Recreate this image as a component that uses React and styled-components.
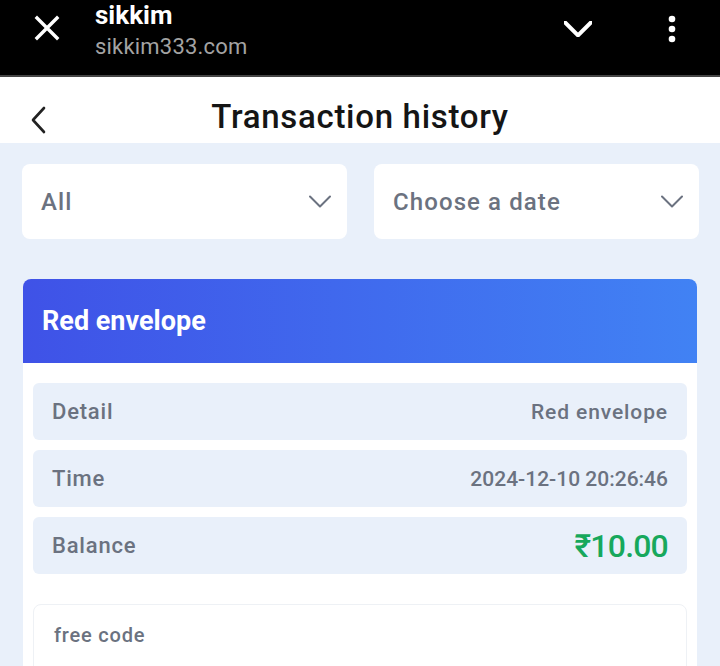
import React from "react";
import styled, { createGlobalStyle } from "styled-components";

const GlobalStyle = createGlobalStyle`
  body {
    margin: 0;
    background: #e9f0fa;
    font-family: Roboto, "Liberation Sans", sans-serif;
  }
`;

const BrowserBar = styled.div`
  height: 77px;
  background: #000;
  border-bottom: 2px solid #444;
  display: flex;
  align-items: flex-start;
  box-sizing: border-box;
`;

const CloseBtn = styled.div`
  width: 95px;
  height: 56px;
  display: flex;
  align-items: center;
  padding-left: 34px;
  box-sizing: border-box;
`;

const SiteInfo = styled.div`
  flex: 1;
  display: flex;
  flex-direction: column;
  padding-top: 1px;
`;

const SiteName = styled.div`
  color: #fff;
  font-size: 26px;
  font-weight: 700;
  line-height: 28px;
`;

const SiteUrl = styled.div`
  color: #a3a3a3;
  font-size: 22px;
  line-height: 36px;
  letter-spacing: 0.2px;
`;

const BarIcon = styled.div`
  width: ${(p) => p.w}px;
  height: 58px;
  display: flex;
  align-items: center;
  justify-content: center;
`;

const Header = styled.div`
  height: 66px;
  background: #fff;
  position: relative;
  display: flex;
  align-items: flex-end;
  justify-content: center;
  box-sizing: border-box;
  padding-bottom: 3px;
`;

const Back = styled.div`
  position: absolute;
  left: 30px;
  top: 29px;
`;

const Title = styled.h1`
  margin: 0;
  font-size: 33px;
  line-height: 46px;
  font-weight: 500;
  color: #151515;
  letter-spacing: 0.7px;
`;

const Filters = styled.div`
  display: grid;
  grid-template-columns: 1fr 1fr;
  gap: 27px;
  padding: 21px 21px 0 22px;
`;

const Select = styled.div`
  height: 75px;
  background: #fff;
  border-radius: 8px;
  display: flex;
  align-items: center;
  justify-content: space-between;
  padding: 0 16px 0 19px;
  font-size: 24px;
  font-weight: 500;
  color: #6b7280;
  letter-spacing: 1.1px;
`;

const Card = styled.div`
  margin: 40px 23px 0;
  background: #fff;
  border-radius: 8px 8px 0 0;
  overflow: hidden;
`;

const CardHead = styled.div`
  height: 84px;
  background: linear-gradient(90deg, #3f52e7 0%, #4182f4 100%);
  display: flex;
  align-items: center;
  padding-left: 19px;
  color: #fff;
  font-size: 27px;
  font-weight: 700;
`;

const CardBody = styled.div`
  padding: 20px 10px 0;
  display: flex;
  flex-direction: column;
  gap: 10px;
`;

const Row = styled.div`
  height: 57px;
  background: #e9f0fa;
  border-radius: 6px;
  display: flex;
  align-items: center;
  justify-content: space-between;
  padding: 0 19px;
  color: #6b7280;
  font-size: 22px;
  font-weight: 500;
  letter-spacing: 0.8px;
`;

const Value = styled.span`
  color: ${(p) => (p.green ? "#17a85c" : "#6b7280")};
  font-size: ${(p) => (p.green ? "32px" : "21px")};
  font-weight: 500;
  letter-spacing: ${(p) => (p.green ? "-0.8px" : p.numeric ? "0px" : "0.9px")};
`;

const Note = styled.div`
  margin-top: 20px;
  height: 80px;
  border: 1px solid #eef1f5;
  border-radius: 8px;
  padding: 18px 20px;
  box-sizing: border-box;
  color: #6b7280;
  font-size: 20px;
  font-weight: 500;
  letter-spacing: 0.8px;
`;

const Chevron = ({ size = 22, color = "#6b7280", width = 2 }) => (
  <svg width={size} height={size / 2 + 2} viewBox="0 0 22 12">
    <path d="M1 1 L11 11 L21 1" fill="none" stroke={color} strokeWidth={width} strokeLinecap="round" strokeLinejoin="round" />
  </svg>
);

export default function App() {
  return (
    <>
      <GlobalStyle />
      <BrowserBar>
        <CloseBtn>
          <svg width="26" height="26" viewBox="0 0 26 26">
            <path d="M3 3 L23 23 M23 3 L3 23" stroke="#fff" strokeWidth="3.4" strokeLinecap="square" />
          </svg>
        </CloseBtn>
        <SiteInfo>
          <SiteName>sikkim</SiteName>
          <SiteUrl>sikkim333.com</SiteUrl>
        </SiteInfo>
        <BarIcon w={92}>
          <Chevron size={28} color="#fff" width={3.2} />
        </BarIcon>
        <BarIcon w={96}>
          <svg width="10" height="28" viewBox="0 0 10 28">
            <circle cx="5" cy="4" r="3.3" fill="#fff" />
            <circle cx="5" cy="14" r="3.3" fill="#fff" />
            <circle cx="5" cy="24" r="3.3" fill="#fff" />
          </svg>
        </BarIcon>
      </BrowserBar>
      <Header>
        <Back>
          <svg width="18" height="28" viewBox="0 0 18 28">
            <path d="M14 2 L3 14 L14 26" fill="none" stroke="#222" strokeWidth="2.6" strokeLinecap="round" strokeLinejoin="round" />
          </svg>
        </Back>
        <Title>Transaction history</Title>
      </Header>
      <Filters>
        <Select>
          All
          <Chevron />
        </Select>
        <Select>
          Choose a date
          <Chevron />
        </Select>
      </Filters>
      <Card>
        <CardHead>Red envelope</CardHead>
        <CardBody>
          <Row>
            Detail
            <Value>Red envelope</Value>
          </Row>
          <Row>
            Time
            <Value numeric>2024-12-10 20:26:46</Value>
          </Row>
          <Row>
            Balance
            <Value green>₹10.00</Value>
          </Row>
          <Note>free code</Note>
        </CardBody>
      </Card>
    </>
  );
}
